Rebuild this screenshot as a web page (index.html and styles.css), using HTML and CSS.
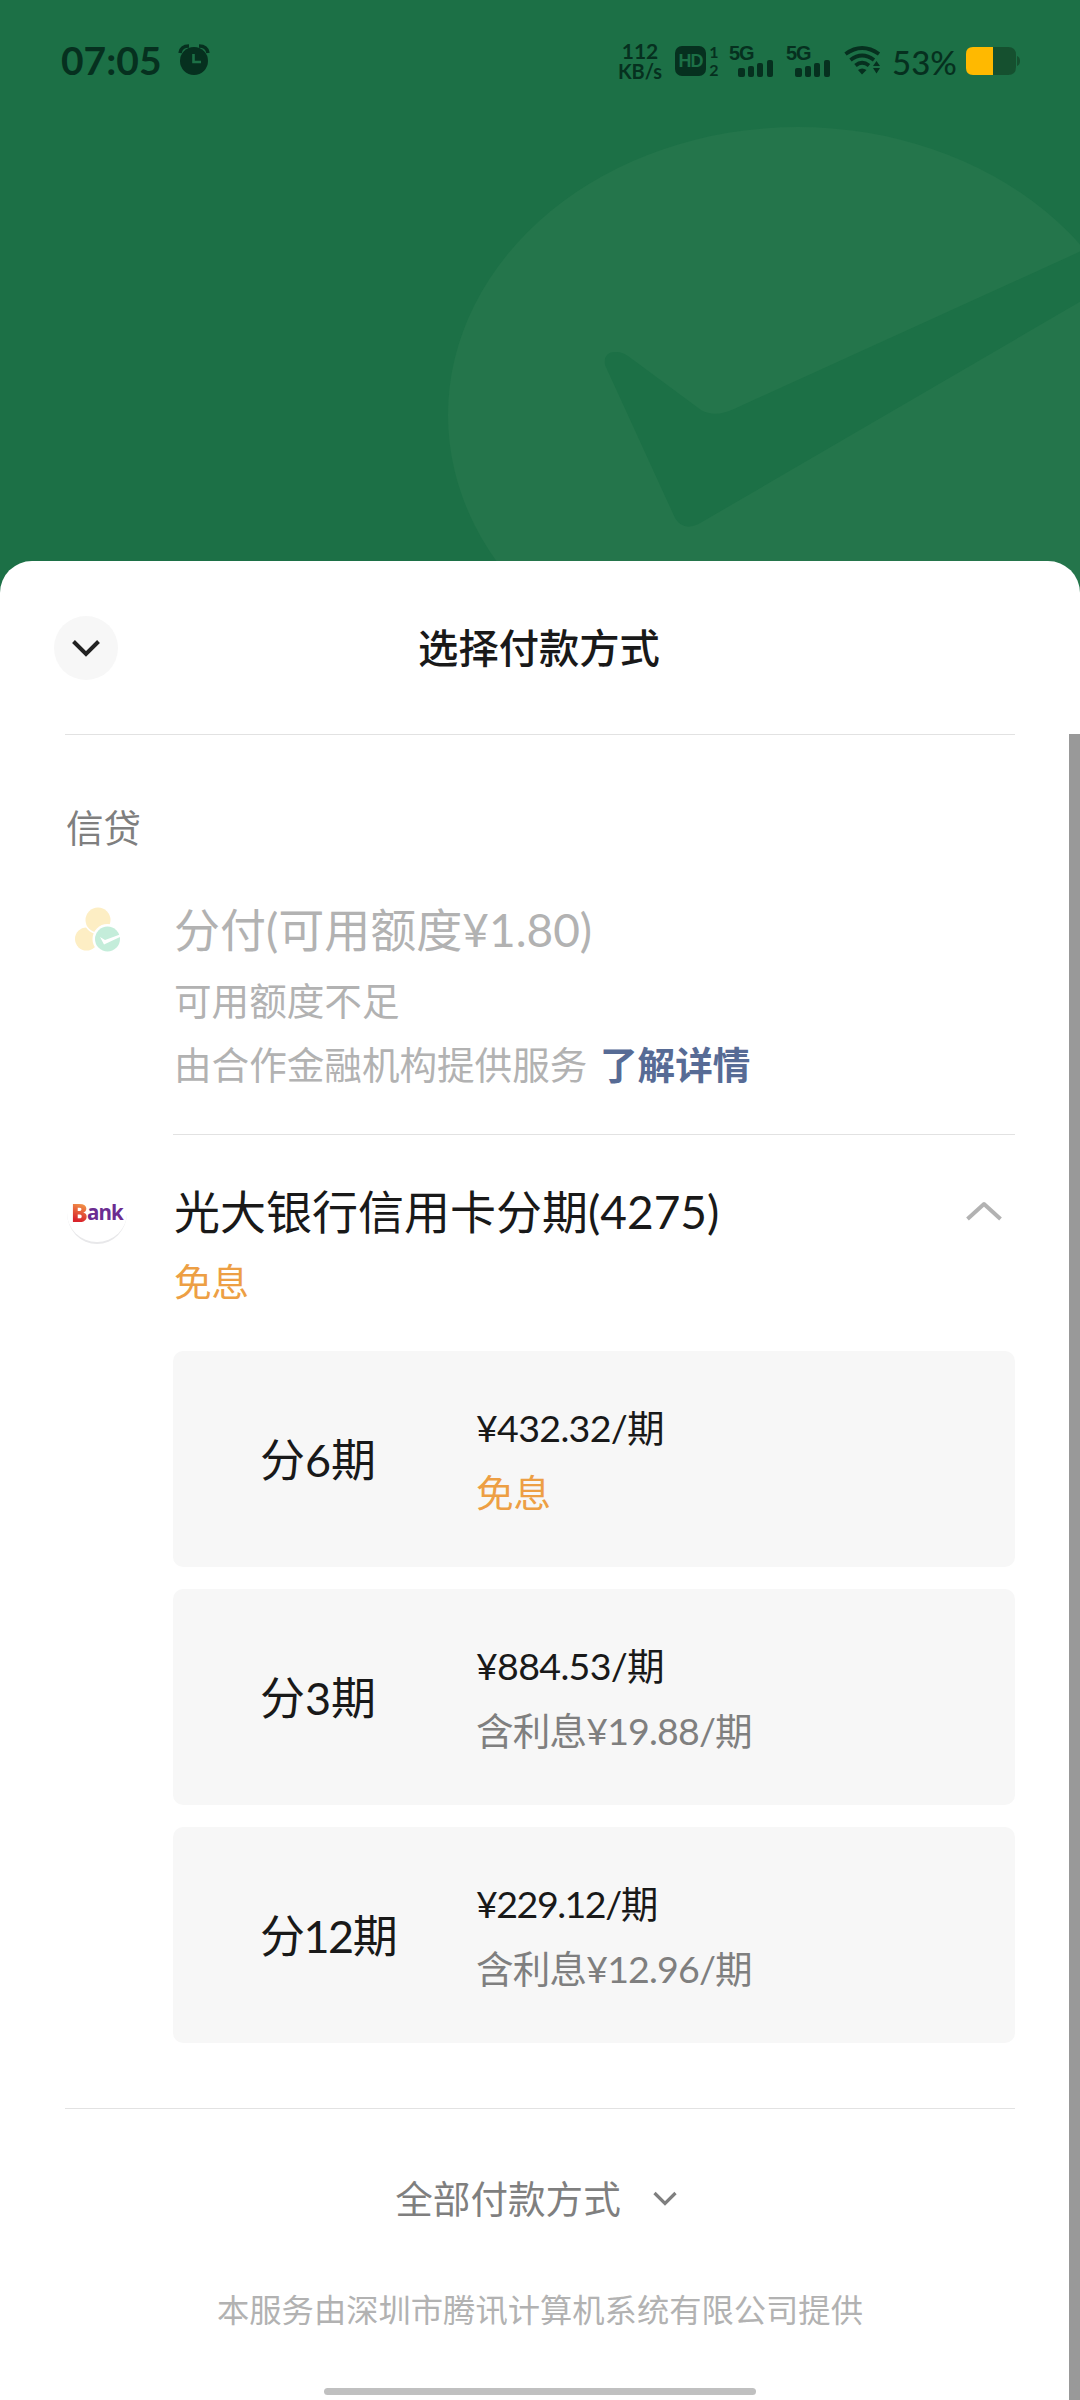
FILE: index.html
```html
<!DOCTYPE html>
<html lang="zh-CN">
<head>
<meta charset="utf-8">
<title>选择付款方式</title>
<link rel="stylesheet" href="styles.css">
</head>
<body>
<div class="screen">
  <svg class="backdrop" viewBox="0 0 1080 600" aria-hidden="true">
    <ellipse cx="798" cy="415" rx="350" ry="288" fill="#24754b"/>
    <path d="M605 365 Q603 351 617 352 Q622 352 628 356 L701 410 Q715 418 734 409 L1090 247 V296 L702 522 Q684 533 675 518 Z" fill="#1c7046"/>
  </svg>

  <header class="status">
    <div class="status-left">
      <span class="clock">07:05</span>
      <svg class="alarm" width="32" height="32" viewBox="0 0 32 32">
        <circle cx="16" cy="17" r="14" fill="#06301f"/>
        <path d="M2 9 Q3 2 11 2 M30 9 Q29 2 21 2" stroke="#06301f" stroke-width="3.500" fill="none"/>
        <path d="M15.500 10 V18 H23" stroke="#1c7046" stroke-width="2.600" fill="none"/>
      </svg>
    </div>
    <div class="status-right">
      <span class="speed"><span>112</span><span class="unit">KB/s</span></span>
      <span class="hd">HD</span>
      <span class="sims"><span>1</span><span>2</span></span>
      <span class="cell"><span class="net">5G</span>
        <svg width="36" height="18" viewBox="0 0 36 18" fill="#06301f"><rect y="9" width="7" height="9" rx="2"/><rect x="10" y="7" width="6" height="11" rx="2"/><rect x="19" y="4" width="6" height="14" rx="2"/><rect x="29" y="1" width="6" height="17" rx="2"/></svg>
      </span>
      <span class="cell"><span class="net">5G</span>
        <svg width="36" height="18" viewBox="0 0 36 18" fill="#06301f"><rect y="9" width="7" height="9" rx="2"/><rect x="10" y="7" width="6" height="11" rx="2"/><rect x="19" y="4" width="6" height="14" rx="2"/><rect x="29" y="1" width="6" height="17" rx="2"/></svg>
      </span>
      <svg class="wifi" width="38" height="30" viewBox="0 0 38 30">
        <g stroke="#06301f" stroke-width="3.800" fill="none"><path d="M1.500 8 Q18 -4 35 8"/><path d="M6.500 14 Q18 5 30 14"/><path d="M11.500 19.500 Q18 14 25 19.500"/></g>
        <path d="M14 24 Q18 21 22.500 24 L18 28.500 Z M32.500 15 L36 20 H29 Z M29 22 H36 L32.500 27.500 Z" fill="#06301f"/>
      </svg>
      <span class="percent">53%</span>
      <svg class="battery" width="54" height="28" viewBox="0 0 54 28">
        <path d="M27 0 H42 Q50 0 50 8 V20 Q50 28 42 28 H27 Z M51 9 Q54 10 54 14 Q54 18 51 19 Z" fill="#15502f"/>
        <path d="M7 0 H27 V28 H7 Q0 28 0 21 V7 Q0 0 7 0 Z" fill="#ffb900"/>
      </svg>
    </div>
  </header>

  <main class="sheet">
    <div class="titlebar">
      <span class="close"><svg width="30" height="20" viewBox="0 0 30 20"><path d="M2.500 3.500 L15 16 L27.500 3.500" fill="none" stroke="#222" stroke-width="4"/></svg></span>
      <h1 class="title">选择付款方式</h1>
    </div>
    <div class="scroller">
      <section class="content">
        <h2 class="group">信贷</h2>
        <div class="method disabled">
          <div class="logo">
            <svg width="46" height="46" viewBox="0 0 46 46">
              <circle cx="11.500" cy="32" r="11.500" fill="#fdeec4"/>
              <circle cx="23" cy="13" r="14" fill="#fff"/><circle cx="23" cy="13" r="12.500" fill="#fdeec4"/>
              <circle cx="32.500" cy="32" r="15" fill="#fff"/><circle cx="32.500" cy="32" r="12.500" fill="#c4edda"/>
              <path d="M25 30 L29 37.500 L45 30 V27.500 L30 33 Z" fill="#fff"/>
            </svg>
          </div>
          <div class="info">
            <p class="name">分付(可用额度¥1.80)</p>
            <p class="note">可用额度不足</p>
            <p class="note service">由合作金融机构提供服务 <a class="link">了解详情</a></p>
          </div>
        </div>
        <div class="method">
          <div class="logo bank"><span><b>B</b>ank</span></div>
          <div class="info">
            <div class="name-row">
              <p class="name">光大银行信用卡分期(4275)</p>
              <svg width="36" height="20" viewBox="0 0 36 20"><path d="M1.500 18 L18 3 L34.500 18" fill="none" stroke="#b2b2b2" stroke-width="4" stroke-linejoin="round"/></svg>
            </div>
            <p class="note free">免息</p>
            <ul class="plans">
              <li class="plan"><span class="term">分6期</span><span class="cost"><span>¥432.32/期</span><span class="free">免息</span></span></li>
              <li class="plan"><span class="term">分3期</span><span class="cost"><span>¥884.53/期</span><span class="fee">含利息¥19.88/期</span></span></li>
              <li class="plan"><span class="term tight">分12期</span><span class="cost"><span class="tight">¥229.12/期</span><span class="fee">含利息¥12.96/期</span></span></li>
            </ul>
          </div>
        </div>
        <footer class="foot">
          <div class="all"><span>全部付款方式</span><svg width="24" height="16" viewBox="0 0 24 16"><path d="M1.500 2 L12 12.500 L22.500 2" fill="none" stroke="#7f7f7f" stroke-width="3.200"/></svg></div>
          <p class="provider">本服务由深圳市腾讯计算机系统有限公司提供</p>
          <div class="home"></div>
        </footer>
      </section>
      <div class="scrollbar"></div>
    </div>
  </main>
</div>
</body>
</html>
```

FILE: styles.css
```css
* { box-sizing: border-box; margin: 0; padding: 0; }
body { font-family: Lato, "Noto Sans CJK SC", sans-serif; font-weight: 400; color: #191919; }
svg { display: block; flex: none; }
.screen { position: relative; width: 1080px; height: 2400px; overflow: hidden; background: #1c7046; display: flex; flex-direction: column; }
.backdrop { position: absolute; left: 0; top: 0; width: 1080px; height: 600px; }

.status { position: relative; height: 561px; flex: none; display: flex; justify-content: space-between; align-items: flex-start; padding: 40px 60px 0 61px; color: #06301f; white-space: nowrap; }
.status-left { display: flex; gap: 17px; align-items: center; height: 40px; }
.clock { font-size: 39px; font-weight: 700; line-height: 40px; width: 100px; }
.status-right { display: flex; height: 42px; align-items: center; }
.speed { display: flex; flex-direction: column; align-items: center; width: 44px; margin-right: 13px; font-size: 21px; font-weight: 700; line-height: 20px; }
.speed .unit { font-size: 20px; }
.hd { width: 31px; height: 30px; border-radius: 7px; background: #06301f; color: #1c7046; font: 700 18px/30px "Liberation Sans", sans-serif; text-align: center; letter-spacing: -1px; }
.sims { display: flex; flex-direction: column; width: 12px; margin: 0 9px 0 2px; font: 700 16px/18px Lato, sans-serif; text-align: center; }
.cell { display: flex; flex-direction: column; width: 45px; height: 31px; margin-right: 12px; }
.cell .net { font: 700 20px/15px "Liberation Sans", sans-serif; letter-spacing: -1px; }
.cell svg { margin: -2px 0 0 9px; }
.wifi { margin: 0 10px 0 1px; }
.percent { width: 65px; font-size: 33px; font-weight: 500; line-height: 40px; padding-top: 1px; margin-right: 9px; }

.sheet { position: relative; flex: 1; background: #fff; border-radius: 32px 32px 0 0; display: flex; flex-direction: column; }
.titlebar { height: 173px; flex: none; display: grid; grid-template-columns: 64px 1fr 64px; align-items: center; padding: 0 56px 0 54px; }
.close { width: 64px; height: 64px; border-radius: 50%; background: #f7f7f7; display: flex; align-items: center; justify-content: center; }
.title { font-size: 40.300px; font-weight: 500; line-height: 60px; text-align: center; }
.scroller { flex: 1; display: flex; justify-content: space-between; }
.content { width: 950px; margin-left: 65px; border-top: 1px solid #e2e2e2; }
.scrollbar { width: 11px; background: #999; }
.group { margin-top: 65px; padding-left: 1px; font-size: 37.500px; line-height: 56px; font-weight: 400; color: #7f7f7f; }

.method { display: flex; }
.logo { width: 108px; flex: none; padding: 51px 0 0 10px; }
.info { flex: 1; }
.name { padding-left: 1px; font-size: 46px; line-height: 64px; white-space: nowrap; }
.note { padding-left: 1px; font-size: 37.600px; line-height: 56px; white-space: nowrap; }
.disabled .info { height: 279px; padding-top: 42px; border-bottom: 1px solid #e2e2e2; color: #b2b2b2; }
.disabled .note { margin-top: 8px; }
.disabled .name + .note { margin-top: 11px; }
.link { margin-left: 3px; color: #576b95; font-weight: 700; }
.name-row { display: flex; justify-content: space-between; align-items: center; padding: 45px 13px 0 0; }
.name-row svg { margin-top: -3px; }
.method .note.free { margin-top: 10px; }
.free { color: #ed9f44; }
.bank { padding: 47px 0 0 2px; }
.bank span { display: flex; align-items: center; justify-content: center; width: 60px; height: 62px; border-radius: 50%; border-bottom: 2px solid #e8e8ea; font: 700 20.500px/24px "Open Sans", sans-serif; letter-spacing: -0.900px; color: #6b2c91; }
.bank b { font-size: 25px; background: linear-gradient(200deg, #f39a4a 15%, #d9242b 80%); -webkit-background-clip: text; background-clip: text; color: transparent; }
.plans { list-style: none; display: flex; flex-direction: column; gap: 22px; margin-top: 41px; }
.plan { display: flex; align-items: center; height: 216px; padding: 2px 0 0 87px; border-radius: 10px; background: #f7f7f7; }
.term { width: 216px; font-size: 45px; line-height: 60px; }
.cost { display: flex; flex-direction: column; gap: 9px; font-size: 37.600px; line-height: 56px; letter-spacing: -0.700px; white-space: nowrap; }
.cost .free { letter-spacing: 0; }
.tight { letter-spacing: -1.500px; }
.fee { letter-spacing: -0.850px; color: #7f7f7f; }
.foot { margin-top: 65px; border-top: 1px solid #e2e2e2; display: flex; flex-direction: column; align-items: center; padding-top: 62px; }
.all { display: flex; align-items: center; gap: 32px; margin-right: 8px; font-size: 37.600px; line-height: 56px; color: #7f7f7f; }
.provider { margin-top: 59px; font-size: 32.300px; line-height: 48px; color: #b2b2b2; white-space: nowrap; }
.home { width: 432px; height: 7px; margin-top: 54px; border-radius: 4px; background: #c0c0c0; }
```
